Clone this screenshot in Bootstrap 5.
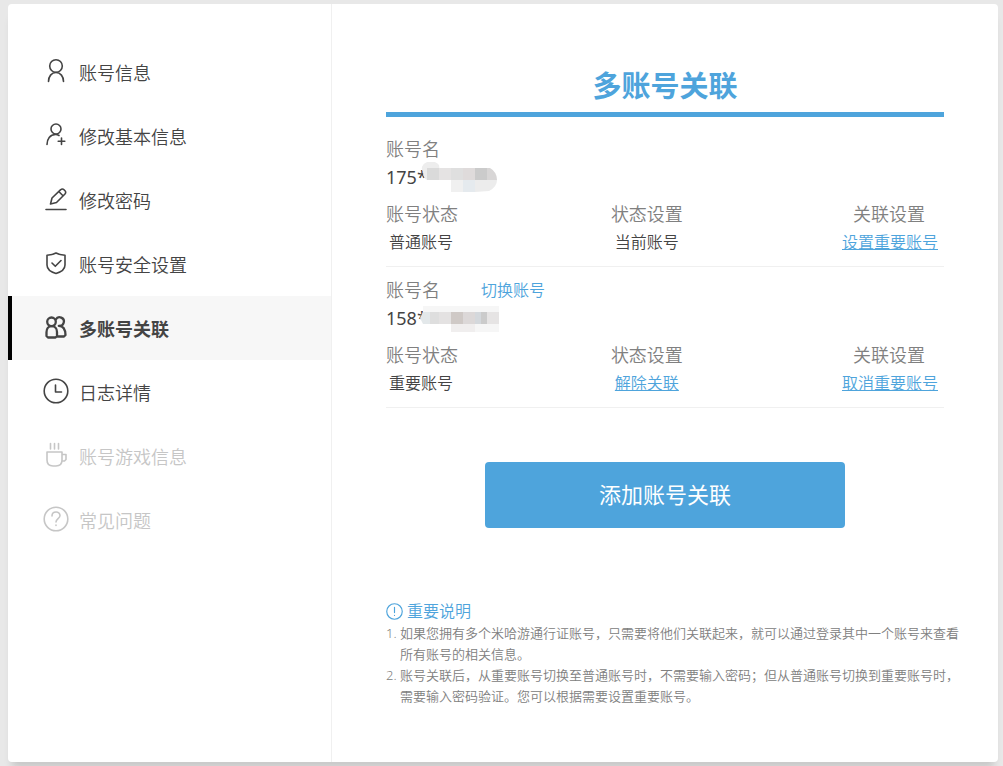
<!DOCTYPE html>
<html lang="zh-CN">
<head>
<meta charset="utf-8">
<meta name="viewport" content="width=device-width, initial-scale=1">
<title>多账号关联</title>
<link href="https://cdn.jsdelivr.net/npm/bootstrap@5.3.0/dist/css/bootstrap.min.css" rel="stylesheet">
<style>
  :root { --accent: #4ea4dc; --ink: #444; --muted: #808080; }
  body { background: #e8e8e8; color: var(--ink); font-family: "Noto Sans", "Noto Sans CJK SC", sans-serif; font-size: 18px; font-weight: 350; line-height: 28px; padding: 4px 5px 4px 8px; }
  a { color: var(--accent); }
  a:hover { color: #2d86c2; }
  .panel { min-height: calc(100vh - 8px); border-radius: 4px; box-shadow: 0 10px 8px -4px rgba(0,0,0,.14); }
  .side { flex: 0 0 324px; padding-top: 36px; border-right: 1px solid #f0f0f0; }
  .side .nav-link { height: 64px; gap: 10px; padding: 0 0 0 31px; border-left: 4px solid transparent; color: var(--ink); }
  .side .nav-link svg { width: 26px; height: 26px; margin-bottom: 2px; flex: none; }
  .side .nav-link span { padding-top: 2px; }
  .side .nav-link.active { background: #f7f7f7; border-left-color: #000; font-weight: 700; }
  .side .nav-link.active svg { stroke-width: 2.3; }
  .side .nav-link.disabled { color: #c6c6c6; }
  svg { fill: none; stroke: currentColor; stroke-width: 1.6; stroke-linecap: round; stroke-linejoin: round; }
  .content { padding: 58px 54px 40px; min-width: 0; }
  .heading { color: var(--accent); font-size: 29px; line-height: 48px; font-weight: 700; padding-bottom: 2px; border-bottom: 5px solid var(--accent); margin-bottom: 9px; }
  .account { padding: 9px 0 10px; border-bottom: 1px solid #f0f0f0; }
  .tag, .states th { color: var(--muted); font-weight: 350; }
  .number { font-weight: 400; }
  .switch { margin-left: 41px; font-size: 16px; }
  .mosaic { position: absolute; left: 32px; top: -1px; stroke: none; }
  .states { width: 100%; margin-top: 9px; table-layout: fixed; }
  .states th, .states td { padding: 0; height: 28px; }
  .states td { font-size: 16px; }
  .states td:first-child { padding-left: 3px; }
  .states th:last-child { padding-right: 19px; text-align: right; }
  .states td:last-child { padding-right: 6px; text-align: right; }
  .first-col { width: 36%; }
  .mid-col { width: 120px; }
  .btn-add { width: 360px; max-width: 100%; height: 66px; margin: 54px auto 72px; padding: 4px 12px 6px; background: var(--accent); color: #fff; font-size: 22px; border: 0; border-radius: 4px; }
  .btn-add:hover { background: #3d95cf; color: #fff; }
  .notes-title { color: var(--accent); font-size: 16px; line-height: 23px; font-weight: 350; gap: 4px; }
  .notes-title svg { stroke-width: 1.1; }
  .notes { color: var(--muted); font-size: 13px; line-height: 21px; padding-left: 14px; margin-right: -20px; }
</style>
</head>
<body>
<div class="panel d-flex bg-white">
  <nav class="side" aria-label="账号">
    <ul class="nav flex-column">
      <li><a class="nav-link d-flex align-items-center" href="#"><svg viewBox="0 0 26 26"><circle cx="13" cy="8" r="6.300"/><path d="M5.500 23.500c0-5 3-9 7.500-9s7.500 4 7.500 9"/></svg><span>账号信息</span></a></li>
      <li><a class="nav-link d-flex align-items-center" href="#"><svg viewBox="0 0 26 26"><circle cx="13" cy="7" r="5"/><path d="M4 22.500c0-5.500 3-10 8.500-10 1.500 0 2.500.300 3.500 1M18.500 16v6.500M15.200 19.200h6.600"/></svg><span>修改基本信息</span></a></li>
      <li><a class="nav-link d-flex align-items-center" href="#"><svg viewBox="0 0 26 26"><path d="M3 23.500h20M7.500 18l1.500-6 8.700-8.300a2.300 2.300 0 0 1 3.300 0l1 1a2.300 2.300 0 0 1 0 3.300L13.500 16.500zM15.800 5.500l4.200 4.200"/></svg><span>修改密码</span></a></li>
      <li><a class="nav-link d-flex align-items-center" href="#"><svg viewBox="0 0 26 26"><path d="M13 3c2.500 1.500 5.500 2 9 2.200V15c0 4-4 7-9 8.500C8 22 4 19 4 15V5.200C7.500 5 10.500 4.500 13 3zM9 13l3.300 3.300L18 10.500"/></svg><span>账号安全设置</span></a></li>
      <li><a class="nav-link active d-flex align-items-center" href="#" aria-current="page"><svg viewBox="0 0 26 26"><circle cx="8.500" cy="7.800" r="4.300"/><path d="M12.800 5.500a4.300 4.300 0 1 1 3 6.300c4 0 6.500 3 6.700 9.200l-1.500 1.500h-6.500"/><path d="M8.700 12.200c-3.500 0-5.200 2.800-5.200 6V22l1.500 1.500h7.500L14 22v-4c0-3.200-1.800-5.800-5.300-5.800z"/></svg><span>多账号关联</span></a></li>
      <li><a class="nav-link d-flex align-items-center" href="#"><svg viewBox="0 0 26 26"><circle cx="13" cy="13" r="11.800"/><path d="M12.500 7v7h6"/></svg><span>日志详情</span></a></li>
      <li><a class="nav-link disabled d-flex align-items-center" href="#" aria-disabled="true"><svg viewBox="0 0 26 26"><path d="M4 10h15v8q0 6-6 6h-3q-6 0-6-6zM19 12.500h4v5l-1.500 1.500H19M7.500 1.500v5.500M11.500 1.500v5.500M15.500 1.500v5.500"/></svg><span>账号游戏信息</span></a></li>
      <li><a class="nav-link disabled d-flex align-items-center" href="#" aria-disabled="true"><svg viewBox="0 0 26 26"><circle cx="13" cy="13" r="11.800"/><path d="M9 10c0-5.300 8-5.300 8-.5 0 3-4 3.200-4 6.500M13 19v.4"/></svg><span>常见问题</span></a></li>
    </ul>
  </nav>
  <main class="content flex-grow-1">
    <h1 class="heading text-center">多账号关联</h1>

    <section class="account">
      <div class="tag">账号名</div>
      <div class="number position-relative">175*
        <svg class="mosaic" width="80" height="30" aria-hidden="true">
          <path fill="#ededed" d="M5 10a9 7 0 0 1 16-7l2 15H9q-4-2-4-8z"/>
          <path fill="#dadada" d="M9 6h12v12H9z"/><path fill="#e5e3e3" d="M21 6h12v12H21z"/><path fill="#dfdfdf" d="M33 6h12v12H33z"/><path fill="#dfdbdb" d="M45 6h12v12H45z"/><path fill="#cbcbcb" d="M57 6h12v12H57z"/><path fill="#d8d6d6" d="M69 6h3q7 4 7 12H69z"/>
          <path fill="#f0f0f0" d="M33 18h12v12H33z"/><path fill="#e5eaee" d="M45 18h12v12H45z"/><path fill="#ececec" d="M57 18h22q0 7-8 11l-14 1z"/>
        </svg>
      </div>
      <table class="states">
        <colgroup><col class="first-col"><col class="mid-col"><col></colgroup>
        <thead><tr><th>账号状态</th><th class="text-center">状态设置</th><th>关联设置</th></tr></thead>
        <tbody><tr><td>普通账号</td><td class="text-center">当前账号</td><td><a href="#">设置重要账号</a></td></tr></tbody>
      </table>
    </section>

    <section class="account">
      <div class="d-flex"><span class="tag">账号名</span><a class="switch text-decoration-none" href="#">切换账号</a></div>
      <div class="number position-relative">158*
        <svg class="mosaic" width="82" height="30" aria-hidden="true">
          <path fill="#f6f6f6" d="M5 3h76v6H5z"/>
          <path fill="#e3e8ea" d="M5 9h7v12H5l-3-6z"/><path fill="#dedede" d="M12 9h9v12h-9z"/><path fill="#e4e2e2" d="M21 9h12v12H21z"/><path fill="#cfc9c6" d="M33 9h12v12H33z"/><path fill="#dcd8d8" d="M45 9h12v12H45z"/><path fill="#d4d8dc" d="M57 9h6v12h-6z"/><path fill="#cbcbcb" d="M63 9h6v12h-6z"/><path fill="#e6e4e4" d="M69 9h12v12H69z"/>
          <path fill="#f0eeee" d="M33 21h24v8H33z"/><path fill="#f6f6f6" d="M57 21h24v8H57z"/>
        </svg>
      </div>
      <table class="states">
        <colgroup><col class="first-col"><col class="mid-col"><col></colgroup>
        <thead><tr><th>账号状态</th><th class="text-center">状态设置</th><th>关联设置</th></tr></thead>
        <tbody><tr><td>重要账号</td><td class="text-center"><a href="#">解除关联</a></td><td><a href="#">取消重要账号</a></td></tr></tbody>
      </table>
    </section>

    <button type="button" class="btn btn-add d-block">添加账号关联</button>

    <h2 class="notes-title d-flex align-items-center mb-0"><svg width="17" height="17" viewBox="0 0 16 16"><circle cx="8" cy="8" r="7.300"/><path d="M8 4v5M8 11.500v.3"/></svg>重要说明</h2>
    <ol class="notes mb-0">
      <li>如果您拥有多个米哈游通行证账号，只需要将他们关联起来，就可以通过登录其中一个账号来查看所有账号的相关信息。</li>
      <li>账号关联后，从重要账号切换至普通账号时，不需要输入密码；但从普通账号切换到重要账号时，需要输入密码验证。您可以根据需要设置重要账号。</li>
    </ol>
  </main>
</div>
<script src="https://cdn.jsdelivr.net/npm/bootstrap@5.3.0/dist/js/bootstrap.bundle.min.js"></script>
</body>
</html>
